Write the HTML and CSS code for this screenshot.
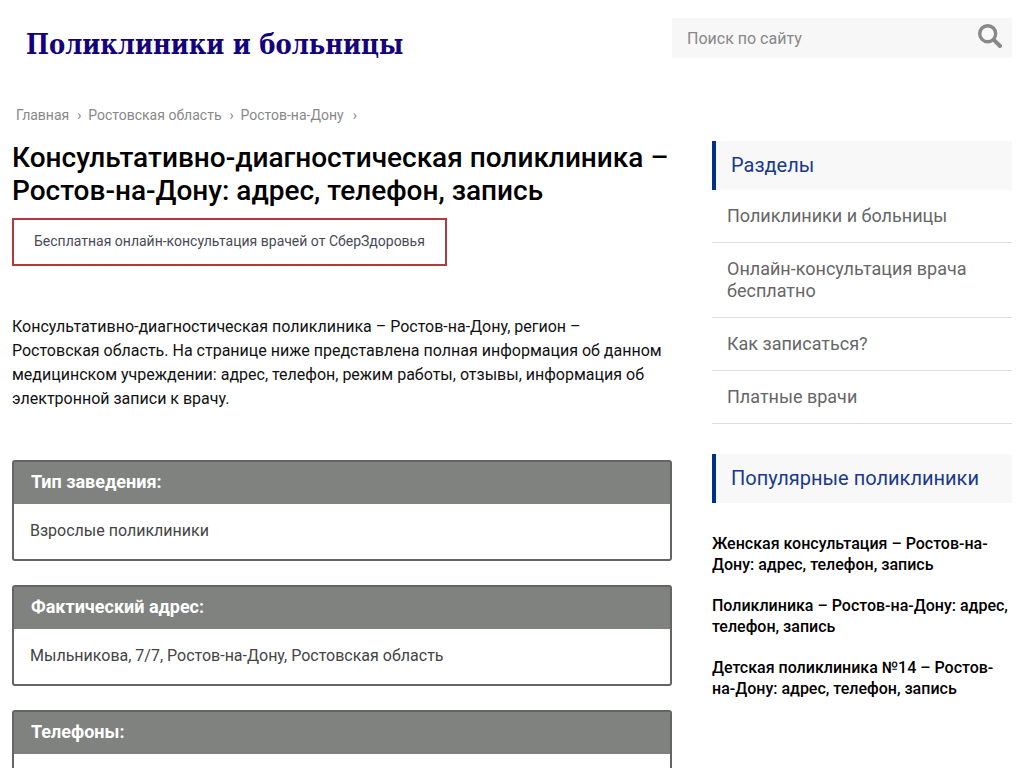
FILE: index.html
```html
<!DOCTYPE html>
<html lang="ru">
<head>
<meta charset="utf-8">
<meta name="viewport" content="width=device-width, initial-scale=1">
<title>Консультативно-диагностическая поликлиника – Ростов-на-Дону</title>
<link rel="stylesheet" href="styles.css">
</head>
<body>
<div class="page">
  <header class="header">
    <a class="logo" href="#">Поликлиники и больницы</a>
    <form class="search" role="search">
      <input class="search-input" type="text" placeholder="Поиск по сайту" aria-label="Поиск по сайту">
      <button class="search-button" type="submit" aria-label="Найти">
        <svg class="search-icon" viewBox="0 0 24 24" width="24" height="24" fill="none" stroke="#888" aria-hidden="true">
          <circle cx="9.7" cy="9.7" r="8" stroke-width="3.4"/>
          <path d="M15.8 15.8L22 22" stroke-width="4" stroke-linecap="round"/>
        </svg>
      </button>
    </form>
  </header>
  <div class="layout">
    <main class="main">
      <nav class="crumbs" aria-label="Навигация">
        <a href="#">Главная</a><span class="sep">›</span>
        <a href="#">Ростовская область</a><span class="sep">›</span>
        <a href="#">Ростов-на-Дону</a><span class="sep sep-last">›</span>
      </nav>
      <h1 class="title">Консультативно-диагностическая поликлиника – Ростов-на-Дону: адрес, телефон, запись</h1>
      <a class="promo" href="#">Бесплатная онлайн-консультация врачей от СберЗдоровья</a>
      <p class="intro">Консультативно-диагностическая поликлиника – Ростов-на-Дону, регион – Ростовская область. На странице ниже представлена полная информация об данном медицинском учреждении: адрес, телефон, режим работы, отзывы, информация об электронной записи к врачу.</p>
      <section class="card">
        <h2 class="card-head">Тип заведения:</h2>
        <p class="card-body">Взрослые поликлиники</p>
      </section>
      <section class="card">
        <h2 class="card-head">Фактический адрес:</h2>
        <p class="card-body">Мыльникова, 7/7, Ростов-на-Дону, Ростовская область</p>
      </section>
      <section class="card">
        <h2 class="card-head">Телефоны:</h2>
        <p class="card-body"></p>
      </section>
    </main>
    <aside class="sidebar">
      <h2 class="side-head">Разделы</h2>
      <ul class="menu">
        <li><a href="#">Поликлиники и больницы</a></li>
        <li><a href="#">Онлайн-консультация врача бесплатно</a></li>
        <li><a href="#">Как записаться?</a></li>
        <li><a href="#">Платные врачи</a></li>
      </ul>
      <h2 class="side-head">Популярные поликлиники</h2>
      <ul class="popular">
        <li><a href="#">Женская консультация – Ростов-на-Дону: адрес, телефон, запись</a></li>
        <li><a href="#">Поликлиника – Ростов-на-Дону: адрес, телефон, запись</a></li>
        <li><a href="#">Детская поликлиника №14 – Ростов-на-Дону: адрес, телефон, запись</a></li>
      </ul>
    </aside>
  </div>
</div>
</body>
</html>
```
FILE: styles.css
```css
* { box-sizing: border-box; }
body {
  margin: 0;
  background: #fff;
  color: #000;
  font-family: Roboto, "Liberation Sans", sans-serif;
  font-size: 16px;
}
a { color: inherit; text-decoration: none; }
h1, h2, p, ul { margin: 0; padding: 0; }
ul { list-style: none; }

.page { max-width: 1200px; margin: 0 auto; padding: 18px 12px 0; }
.header { display: flex; justify-content: space-between; align-items: flex-start; }
.logo {
  padding: 9px 14px 11px;
  color: #14007d;
  font: bold 27px/36px "DejaVu Serif Condensed", "DejaVu Serif", serif;
}
.search { display: flex; width: 340px; height: 40px; background: #f7f7f7; }
.search-input {
  flex: 1;
  min-width: 0;
  padding: 1px 15px 0;
  border: 0;
  background: transparent;
  color: #888;
  font: 16px/20px Roboto, "Liberation Sans", sans-serif;
}
.search-input::placeholder { color: #888; opacity: 1; }
.search-button {
  display: flex;
  padding: 6px 10px;
  border: 0;
  background: transparent;
}

.layout { display: flex; gap: 40px; padding-top: 31px; }
.main { flex: 1; min-width: 0; }
.crumbs {
  display: flex;
  padding: 0 4px;
  margin-bottom: 16px;
  color: #888;
  font-size: 14px;
  line-height: 20px;
}
.sep { width: 19px; padding-left: 8px; }
.sep-last { padding-left: 9px; }
.title { font-size: 28px; font-weight: 500; line-height: 33px; }
.promo {
  display: inline-block;
  margin-top: 11px;
  padding: 11px 20px 13px;
  border: 2px solid #b23a3f;
  color: #4a4a55;
  font-size: 14px;
  line-height: 20px;
}
.intro { margin: 49px 0; color: #111; line-height: 24px; }
.card {
  margin-bottom: 24px;
  border: 2px solid #646464;
  border-radius: 3px;
}
.card-head {
  padding: 9px 17px 11px;
  background: #80827f;
  color: #fff;
  font-size: 18px;
  font-weight: 700;
  line-height: 22px;
}
.card-body { min-height: 55px; padding: 15px 16px 16px; color: #444; line-height: 24px; }

.sidebar { width: 300px; padding-top: 36px; }
.side-head {
  padding: 12px 15px;
  border-left: 4px solid #002f8e;
  background: #f8f8f8;
  color: #183a8c;
  font-size: 20px;
  font-weight: 400;
  line-height: 25px;
}
.menu { margin-bottom: 30px; }
.menu li {
  padding: 15px;
  border-bottom: 1px solid #ddd;
  color: #666;
  font-size: 18px;
  line-height: 22px;
}
.popular { display: grid; gap: 20px; padding-top: 30px; font-weight: 500; line-height: 21px; }
```
